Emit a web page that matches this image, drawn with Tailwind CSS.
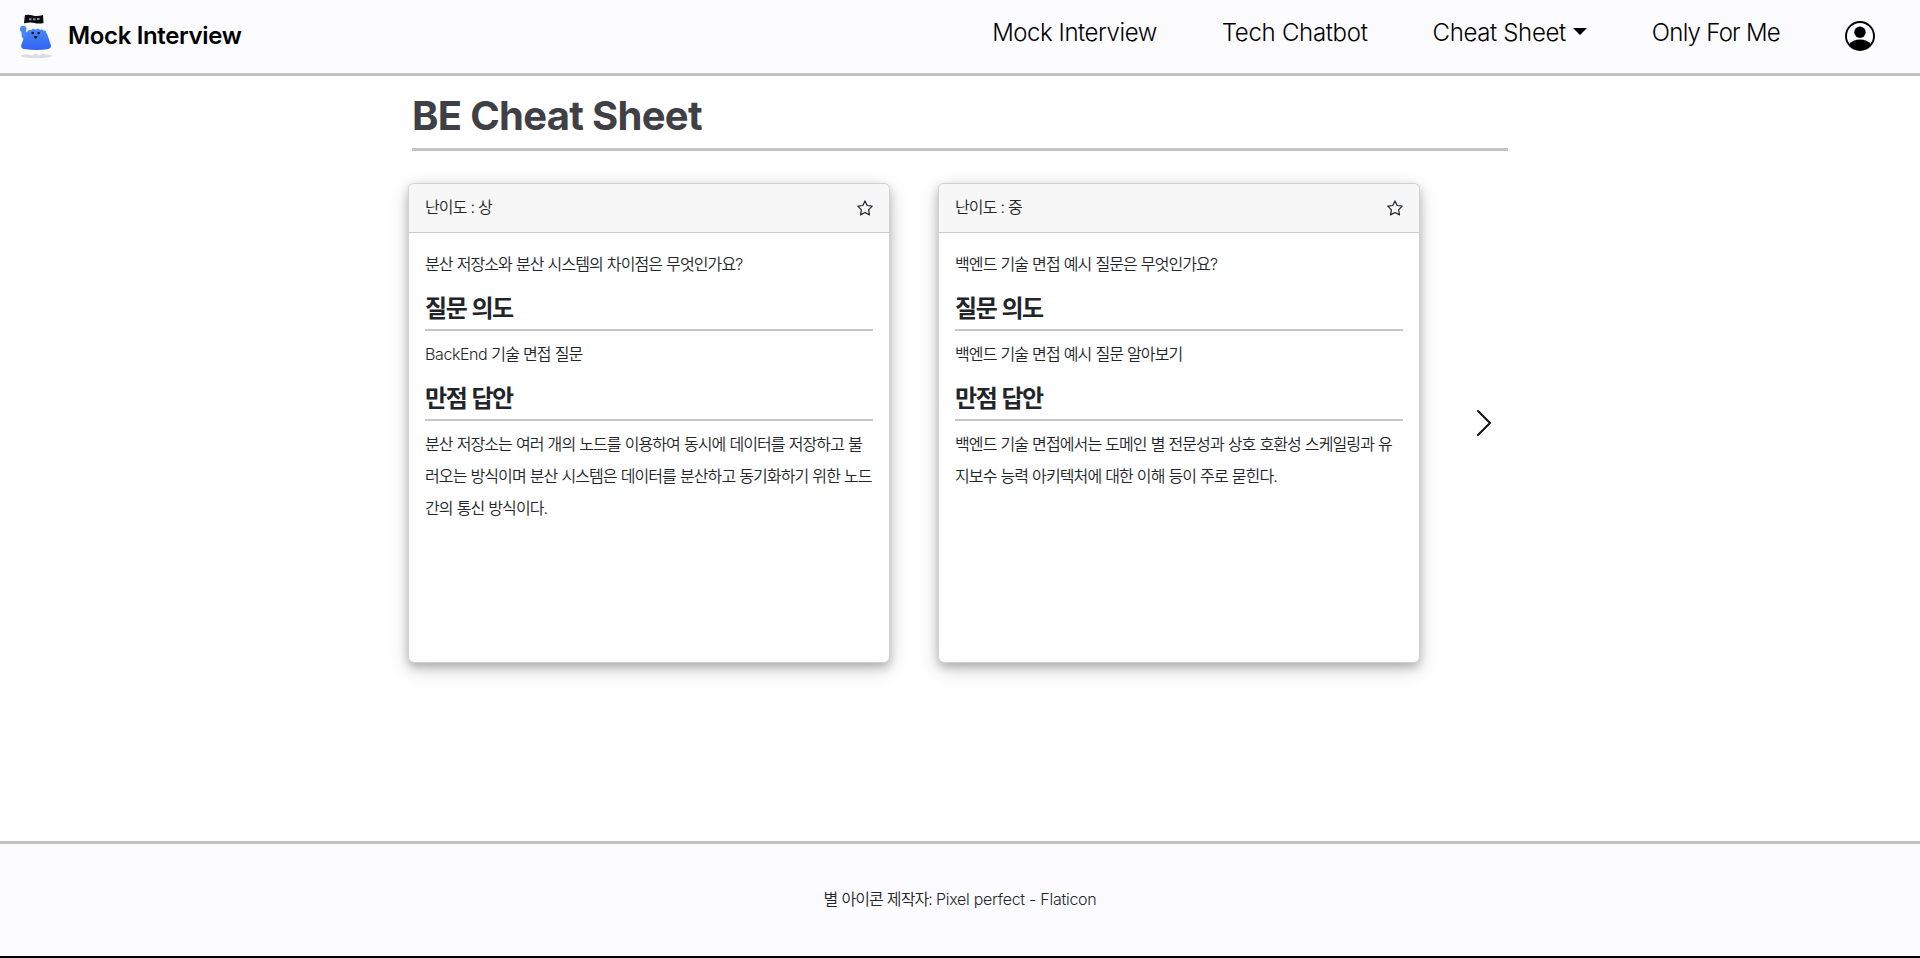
<!DOCTYPE html>
<html lang="ko">
<head>
<meta charset="utf-8">
<title>BE Cheat Sheet</title>
<script src="https://cdn.jsdelivr.net/npm/@tailwindcss/browser@4"></script>
</head>
<body class="flex h-[958px] flex-col overflow-hidden bg-white font-['Inter','Noto_Sans_CJK_KR',sans-serif] text-[#212529]">
<header class="flex h-[76px] shrink-0 items-center border-b-3 border-[#c2c2c4] bg-[#fcfcff] pl-[19px] pr-[45px] text-black">
  <a class="flex items-center gap-[15px]">
    <svg class="h-[46px] w-[34px]" viewBox="0 0 34 46">
      <ellipse cx="17.500" cy="42" rx="15.500" ry="2.200" fill="#dcdcde"/>
      <path d="M5 1.500L6.500 12" stroke="#d5d7dc" stroke-width="1"/>
      <path d="M6 1Q10 .2 14 1.500T24 1L24.500 9Q20 10 15.500 9T5 9.300Z" fill="#0c0d10"/>
      <path d="M10 4.300h2.500v2H10zM14 4.300h2.500v2H14zM18 4h2.500v2H18z" fill="#8b8d92"/>
      <circle cx="4.200" cy="15" r="3.200" fill="#4a86f5"/>
      <path d="M2.200 16L2.800 23L6 27L9 20L6 16Z" fill="#4a86f5"/>
      <path d="M9 35H14.500L15.500 40.500Q11 43 7.500 39.500ZM18 35H22V41Q19 42 18 40Z" fill="#fff"/>
      <path d="M10.500 15Q12 13 17 13.200Q23 12.500 25 14.800Q28 18 32 31.500Q32.500 34.500 28 35.300Q18 37 5 35Q1 34.200 2.500 30Q7 18 10.500 15Z" fill="url(#body)"/>
      <path d="M9.800 16Q11 12.500 14.500 12.500Q21 10 25 14.500L26 16.500Q24.500 17.300 23 15.300Q21 16.500 19 14.500Q16.500 16.300 14.200 14.500Q12 17 9.800 16Z" fill="#f8fbff"/>
      <circle cx="13.700" cy="19" r="1.300" fill="#10162c"/><circle cx="19.600" cy="19" r="1.300" fill="#10162c"/>
      <path d="M14.800 22h3.800Q17.800 25 16.700 24.800Q15.200 24.500 14.800 22Z" fill="#10162c"/>
      <defs><linearGradient id="body" x1="0" y1="0" x2="0" y2="1"><stop stop-color="#4a8cf7"/><stop offset="1" stop-color="#2f63f0"/></linearGradient></defs>
    </svg>
    <span class="-mt-0.5 text-2xl font-semibold leading-8 tracking-[-0.35px]">Mock Interview</span>
  </a>
  <nav class="ml-auto flex items-center gap-[65px] text-2xl font-light leading-8">
    <a class="-mt-2 tracking-[-0.45px]">Mock Interview</a>
    <a class="-mt-2 tracking-[-0.3px]">Tech Chatbot</a>
    <a class="-mt-2 flex items-center gap-[7px] tracking-[-0.35px]">Cheat Sheet<svg class="-mt-[2px] h-[7px] w-[14px]" viewBox="0 0 14 7"><path d="M0 0H14L7 7Z"/></svg></a>
    <a class="-mt-2 tracking-[-0.75px]">Only For Me</a>
    <svg class="-mt-px size-[30px]" viewBox="0 0 30 30"><circle cx="15" cy="15" r="14" fill="none" stroke="#000" stroke-width="1.900"/><circle cx="15" cy="11.300" r="5.700"/><path d="M3.800 23.500Q8 18.500 15 18.500T26.200 23.500A14.500 14.500 0 0 1 3.800 23.500Z"/></svg>
  </nav>
</header>
<main class="mx-auto flex w-[1104px] grow flex-col">
  <h1 class="mx-1 h-[75px] border-b-3 border-[#c2c2c4] pt-4 text-[40px] font-bold leading-[48px] tracking-[-0.7px] text-[#3f4046]">BE Cheat Sheet</h1>
  <section class="mt-8 flex items-center">
    <article class="h-[480px] w-[482px] rounded-md border border-black/17.5 bg-white shadow-[0_4px_8px_rgba(0,0,0,0.2),0_6px_20px_rgba(0,0,0,0.19)]">
      <div class="flex h-[49px] items-center justify-between rounded-t-md border-b border-[#cbcbcb] bg-[#f7f7f7] px-4">
        <span class="-mt-0.5 font-[350] tracking-[-0.9px] [word-spacing:0.4px]">난이도 : 상</span>
        <svg class="size-4" viewBox="0 0 16 16" fill="none" stroke="#212529" stroke-width="1.200" stroke-linejoin="round"><path d="M8 .9L10.200 5.500L15.200 6.200L11.600 9.800L12.500 14.900L8 12.500L3.500 14.900L4.400 9.800L.8 6.200L5.800 5.500Z"/></svg>
      </div>
      <div class="px-4 pt-[15px] font-[350] leading-8 tracking-[-0.9px] [word-spacing:0.4px] whitespace-nowrap">
        <p>분산 저장소와 분산 시스템의 차이점은 무엇인가요?</p>
        <h2 class="mb-[7px] h-[51px] border-b-2 border-[#c6c6c6] pt-[13px] text-2xl font-bold tracking-[-1.35px] [word-spacing:0.6px]">질문 의도</h2>
        <p><span class="tracking-[-0.4px]">BackEnd</span> 기술 면접 질문</p>
        <h2 class="mb-[7px] h-[51px] border-b-2 border-[#c6c6c6] pt-[13px] text-2xl font-bold tracking-[-1.35px] [word-spacing:0.6px]">만점 답안</h2>
        <p>분산 저장소는 여러 개의 노드를 이용하여 동시에 데이터를 저장하고 불<br>러오는 방식이며 분산 시스템은 데이터를 분산하고 동기화하기 위한 노드<br>간의 통신 방식이다.</p>
      </div>
    </article>
    <article class="ml-12 h-[480px] w-[482px] rounded-md border border-black/17.5 bg-white shadow-[0_4px_8px_rgba(0,0,0,0.2),0_6px_20px_rgba(0,0,0,0.19)]">
      <div class="flex h-[49px] items-center justify-between rounded-t-md border-b border-[#cbcbcb] bg-[#f7f7f7] px-4">
        <span class="-mt-0.5 font-[350] tracking-[-0.9px] [word-spacing:0.4px]">난이도 : 중</span>
        <svg class="size-4" viewBox="0 0 16 16" fill="none" stroke="#212529" stroke-width="1.200" stroke-linejoin="round"><path d="M8 .9L10.200 5.500L15.200 6.200L11.600 9.800L12.500 14.900L8 12.500L3.500 14.900L4.400 9.800L.8 6.200L5.800 5.500Z"/></svg>
      </div>
      <div class="px-4 pt-[15px] font-[350] leading-8 tracking-[-0.9px] [word-spacing:0.4px] whitespace-nowrap">
        <p>백엔드 기술 면접 예시 질문은 무엇인가요?</p>
        <h2 class="mb-[7px] h-[51px] border-b-2 border-[#c6c6c6] pt-[13px] text-2xl font-bold tracking-[-1.35px] [word-spacing:0.6px]">질문 의도</h2>
        <p>백엔드 기술 면접 예시 질문 알아보기</p>
        <h2 class="mb-[7px] h-[51px] border-b-2 border-[#c6c6c6] pt-[13px] text-2xl font-bold tracking-[-1.35px] [word-spacing:0.6px]">만점 답안</h2>
        <p>백엔드 기술 면접에서는 도메인 별 전문성과 상호 호환성 스케일링과 유<br>지보수 능력 아키텍처에 대한 이해 등이 주로 묻힌다.</p>
      </div>
    </article>
    <svg class="ml-[56px] h-7 w-4" viewBox="0 0 16 28" fill="none" stroke="#111" stroke-width="2" stroke-linecap="round" stroke-linejoin="round"><path d="M2 2L14 14L2 26"/></svg>
  </section>
</main>
<footer class="flex h-[117px] shrink-0 items-center justify-center border-t-3 border-b-2 border-t-[#c2c2c4] border-b-black bg-[#fcfcff] pb-0.5 font-[350] text-[#212529]">
  <p class="tracking-[-0.27px]"><span class="tracking-[-0.9px] [word-spacing:0.4px]">별 아이콘 제작자: </span>Pixel perfect - Flaticon</p>
</footer>
</body>
</html>
